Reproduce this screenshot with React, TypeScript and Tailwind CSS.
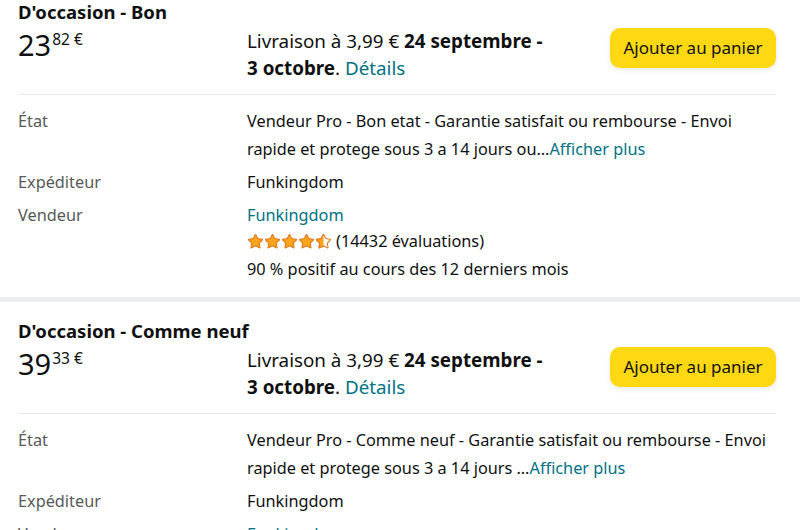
import { Star, StarHalf } from "lucide-react";

type Offer = {
  condition: string;
  whole: string;
  cents: string;
  state: string;
};

const offers: Offer[] = [
  {
    condition: "D'occasion - Bon",
    whole: "23",
    cents: "82",
    state: "Vendeur Pro - Bon etat - Garantie satisfait ou rembourse - Envoi rapide et protege sous 3 a 14 jours ou…",
  },
  {
    condition: "D'occasion - Comme neuf",
    whole: "39",
    cents: "33",
    state: "Vendeur Pro - Comme neuf - Garantie satisfait ou rembourse - Envoi rapide et protege sous 3 a 14 jours …",
  },
];

function Stars() {
  return (
    <span className="inline-flex items-center">
      {[0, 1, 2, 3].map((i) => (
        <Star key={i} size={17} className="fill-[#ffa41c] text-[#de7921]" strokeWidth={1.5} />
      ))}
      <span className="relative inline-flex">
        <Star size={17} className="text-[#de7921]" strokeWidth={1.5} />
        <StarHalf size={17} className="absolute left-0 top-0 fill-[#ffa41c] text-[#de7921]" strokeWidth={1.5} />
      </span>
    </span>
  );
}

function Row({ label, children }: { label: string; children: React.ReactNode }) {
  return (
    <div className="flex">
      <div className="w-[229px] shrink-0 text-[#565959]">{label}</div>
      <div className="flex-1 pr-[8px]">{children}</div>
    </div>
  );
}

function OfferCard({ offer }: { offer: Offer }) {
  return (
    <div className="pl-[18px] pr-[24px]">
      <h2 className="text-[18.5px] font-bold leading-[24px]">{offer.condition}</h2>
      <div className="mt-[4px] flex">
        <div className="flex w-[229px] shrink-0 items-start">
          <span className="text-[29px] leading-[34px]">{offer.whole}</span>
          <span className="pl-[1px] pt-[3px] text-[15.5px] leading-[16px]">{offer.cents} €</span>
        </div>
        <div className="flex-1 text-[18.8px] leading-[27px]">
          Livraison à 3,99 € <b>24 septembre -</b>
          <br />
          <b>3 octobre</b>. <span className="text-[#007185]">Détails</span>
        </div>
        <button className="h-[40px] w-[166px] shrink-0 rounded-[10px] bg-[#ffd814] text-[17px] text-[#0f1111] shadow-[0_2px_5px_rgba(213,217,217,0.6)]">
          Ajouter au panier
        </button>
      </div>
      <div className="mt-[12px] border-t border-[#e7e7e7]" />
      <div className="flex flex-col gap-[5px] pt-[12px] pb-[12px] text-[16.3px] leading-[28px]">
        <Row label="État">
          <span>{offer.state}</span>
          <span className="text-[#007185]">Afficher plus</span>
        </Row>
        <Row label="Expéditeur">Funkingdom</Row>
        <Row label="Vendeur">
          <div className="text-[#007185]">Funkingdom</div>
          <div className="flex items-center gap-[4px] leading-[24px]">
            <Stars />
            <span>(14432 évaluations)</span>
          </div>
          <div className="pt-[1px] leading-[31px]">90 % positif au cours des 12 derniers mois</div>
        </Row>
      </div>
    </div>
  );
}

export default function App() {
  return (
    <div className="h-[530px] w-[800px] overflow-hidden bg-white font-['Noto_Sans',sans-serif] text-[#0f1111]">
      <OfferCard offer={offers[0]} />
      <div className="h-[5px] bg-[#e8eef2]" />
      <div className="pt-[17px]">
        <OfferCard offer={offers[1]} />
      </div>
    </div>
  );
}
